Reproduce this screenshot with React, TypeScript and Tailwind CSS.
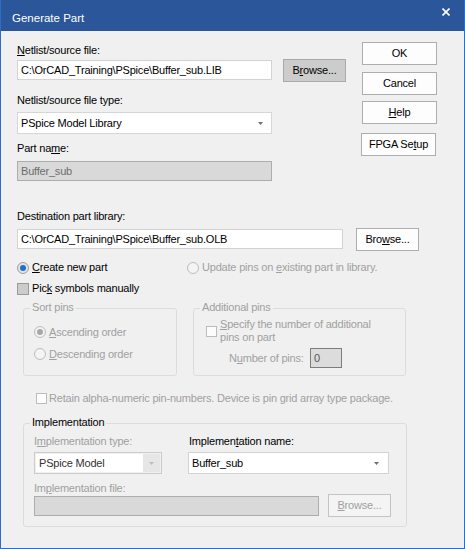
import type { ReactNode } from 'react'

const muted = 'text-[#a0a0a0]'

function Label({ children, className = '' }: { children: ReactNode; className?: string }) {
  return <div className={`h-[13px] leading-[13px] whitespace-nowrap ${className}`}>{children}</div>
}

function Button({ children, className = '' }: { children: ReactNode; className?: string }) {
  return (
    <div
      className={`flex h-[23px] items-center justify-center border whitespace-nowrap ${className}`}
    >
      {children}
    </div>
  )
}

function Arrow({ color = '#707070' }: { color?: string }) {
  return (
    <svg width="5" height="3" viewBox="0 0 5 3">
      <path d="M0 0h5L2.5 3z" fill={color} />
    </svg>
  )
}

function Radio({ checked, disabled }: { checked?: boolean; disabled?: boolean }) {
  return (
    <span
      className={`flex h-[12px] w-[12px] shrink-0 items-center justify-center rounded-full border ${
        disabled ? 'border-[#bcbcbc] bg-[#f4f4f4]' : 'border-[#9d9d9d] bg-[#e4e4e4]'
      }`}
    >
      {checked && (
        <span className={`h-[6px] w-[6px] rounded-full ${disabled ? 'bg-[#a8a8a8]' : 'bg-[#1f6fd0]'}`} />
      )}
    </span>
  )
}

function Check({ filled, size = 'h-[11px] w-[11px]' }: { filled?: boolean; size?: string }) {
  return (
    <span
      className={`block shrink-0 border ${size} ${
        filled ? 'border-[#9a9a9a] bg-[#cccccc]' : 'border-[#bcbcbc] bg-[#fcfcfc]'
      }`}
    />
  )
}

function GroupBox({
  title,
  dim,
  className = '',
  children,
}: {
  title: string
  dim?: boolean
  className?: string
  children: ReactNode
}) {
  return (
    <div className={`relative rounded-[3px] border border-[#dcdcdc] ${className}`}>
      <span
        className={`absolute top-[-8px] left-[6px] bg-[#f0f0f0] px-[2px] leading-[13px] whitespace-nowrap ${
          dim ? muted : ''
        }`}
      >
        {title}
      </span>
      {children}
    </div>
  )
}

export default function App() {
  return (
    <div className="flex h-[549px] w-[465px] flex-col border-x border-b border-[#2b6dc7] bg-[#f0f0f0] font-['Liberation_Sans',Arial,sans-serif] text-[11px] text-black">
      {/* title bar */}
      <div className="flex h-[31px] shrink-0 items-start justify-between bg-[#2b579a] text-white">
        <div className="mt-[12px] pl-[11px] text-[11.5px] leading-[13px]">Generate Part</div>
        <svg className="mt-[8px] mr-[14px]" width="8" height="8" viewBox="0 0 8 8">
          <path d="M0.5 0.5l7 7M7.5 0.5l-7 7" stroke="#fff" strokeWidth="1.6" />
        </svg>
      </div>

      <div className="flex flex-1 flex-col pl-[16px] tracking-[-0.2px]">
        {/* source file fields + dialog buttons */}
        <div className="flex">
          <div className="flex w-[345px] flex-col pt-[13px]">
            <Label>
              <u>N</u>etlist/source file:
            </Label>
            <div className="mt-[2px] flex items-start">
              <div className="mt-[1px] flex h-[20px] w-[255px] items-center border border-[#d3d3d3] bg-white pl-[3px] whitespace-nowrap">
                C:\OrCAD_Training\PSpice\Buffer_sub.LIB
              </div>
              <Button className="ml-[11px] w-[63px] border-[#a9a9a9] bg-[#cccccc]">
                B<u>r</u>owse...
              </Button>
            </div>
            <Label className="mt-[12px]">Netlist/source file type:</Label>
            <div className="mt-[5px] flex h-[22px] w-[255px] items-center justify-between border border-[#d6d6d6] bg-white pr-[8px] pl-[3px]">
              <span>PSpice Model Library</span>
              <Arrow />
            </div>
            <Label className="mt-[8px]">
              Part na<u>m</u>e:
            </Label>
            <div className="mt-[6px] flex h-[20px] w-[255px] items-center border border-[#adadad] bg-[#d9d9d9] pl-[3px] text-[#6d6d6d]">
              Buffer_sub
            </div>
          </div>

          <div className="flex flex-col pt-[11px]">
            <Button className="w-[75px] border-[#adadad] bg-[#fdfdfd]">OK</Button>
            <Button className="mt-[7px] w-[75px] border-[#adadad] bg-[#fdfdfd]">Cancel</Button>
            <Button className="mt-[6px] w-[75px] border-[#adadad] bg-[#fdfdfd]">
              <u>H</u>elp
            </Button>
            <Button className="mt-[9px] ml-[-1px] w-[75px] border-[#adadad] bg-[#fdfdfd]">
              FPGA Se<u>t</u>up
            </Button>
          </div>
        </div>

        {/* destination library */}
        <Label className="mt-[29px]">Destination part library:</Label>
        <div className="mt-[5px] flex items-start">
          <div className="mt-[1px] flex h-[20px] w-[326px] items-center border border-[#d3d3d3] bg-white pl-[3px] whitespace-nowrap">
            C:\OrCAD_Training\PSpice\Buffer_sub.OLB
          </div>
          <Button className="ml-[13px] w-[63px] border-[#adadad] bg-[#fdfdfd]">
            Bro<u>w</u>se...
          </Button>
        </div>

        <div className="mt-[9px] flex h-[15px] items-center">
          <div className="flex w-[170px] items-center gap-[3px]">
            <Radio checked />
            <span>
              <u>C</u>reate new part
            </span>
          </div>
          <div className={`flex items-center gap-[3px] whitespace-nowrap ${muted}`}>
            <Radio disabled />
            <span>
              Update pins on <u>e</u>xisting part in library.
            </span>
          </div>
        </div>

        <div className="mt-[6px] flex h-[15px] items-center gap-[3px]">
          <Check filled size="h-[12px] w-[12px]" />
          <span>
            Pic<u>k</u> symbols manually
          </span>
        </div>

        {/* pin options */}
        <div className={`mt-[12px] flex ${muted}`}>
          <GroupBox title="Sort pins" dim className="ml-[6px] h-[68px] w-[154px]">
            <div className="flex flex-col pt-[16px] pl-[10px]">
              <div className="flex h-[14px] items-center gap-[3px]">
                <Radio checked disabled />
                <span>
                  <u>A</u>scending order
                </span>
              </div>
              <div className="mt-[8px] flex h-[14px] items-center gap-[3px]">
                <Radio disabled />
                <span>
                  <u>D</u>escending order
                </span>
              </div>
            </div>
          </GroupBox>

          <GroupBox title="Additional pins" dim className="ml-[16px] h-[68px] w-[213px]">
            <div className="flex flex-col pt-[9px] pl-[12px]">
              <div className="flex items-center gap-[3px]">
                <Check />
                <div className="leading-[13px]">
                  <div>
                    <u>S</u>pecify the number of additional
                  </div>
                  <div>pins on part</div>
                </div>
              </div>
              <div className="mt-[4px] ml-[23px] flex items-center">
                <span className="w-[81px]">
                  N<u>u</u>mber of pins:
                </span>
                <div className="flex h-[20px] w-[32px] items-center border border-[#7d7d7d] bg-[#dcdcdc] pl-[3px] text-[#555]">
                  0
                </div>
              </div>
            </div>
          </GroupBox>
        </div>

        <div className={`mt-[15px] ml-[19px] flex h-[15px] items-center gap-[2px] whitespace-nowrap ${muted}`}>
          <Check />
          <span>Retain alpha-numeric pin-numbers. Device is pin grid array type package.</span>
        </div>

        {/* implementation */}
        <GroupBox title="Implementation" className="mt-[17px] ml-[6px] h-[104px] w-[384px]">
          <div className="flex flex-col pt-[11px] pl-[10px]">
            <div className="flex">
              <div className="flex w-[128px] flex-col">
                <Label className={muted}>
                  I<u>m</u>plementation type:
                </Label>
                <div className="mt-[4px] flex h-[22px] border border-[#cccccc] bg-[#f0f0f0] p-[1px]">
                  <div className="flex flex-1 items-center bg-white pl-[3px] text-[#333]">PSpice Model</div>
                  <div className="flex w-[17px] items-center justify-center bg-[#e6e6e6]">
                    <Arrow color="#bdbdbd" />
                  </div>
                </div>
              </div>
              <div className="ml-[26px] flex w-[201px] flex-col">
                <Label className="pl-[1px]">
                  Implemen<u>t</u>ation name:
                </Label>
                <div className="mt-[4px] flex h-[22px] items-center justify-between border border-[#d3d3d3] bg-white pr-[9px] pl-[3px]">
                  <span>Buffer_sub</span>
                  <Arrow />
                </div>
              </div>
            </div>
            <Label className={`mt-[8px] ${muted}`}>
              Im<u>p</u>lementation file:
            </Label>
            <div className="mt-[-1px] flex items-start">
              <div className="mt-[2px] h-[20px] w-[285px] border border-[#adadad] bg-[#d9d9d9]" />
              <Button className={`ml-[9px] w-[63px] border-[#c4c4c4] bg-[#f4f4f4] ${muted}`}>
                <u>B</u>rowse...
              </Button>
            </div>
          </div>
        </GroupBox>
      </div>
    </div>
  )
}
